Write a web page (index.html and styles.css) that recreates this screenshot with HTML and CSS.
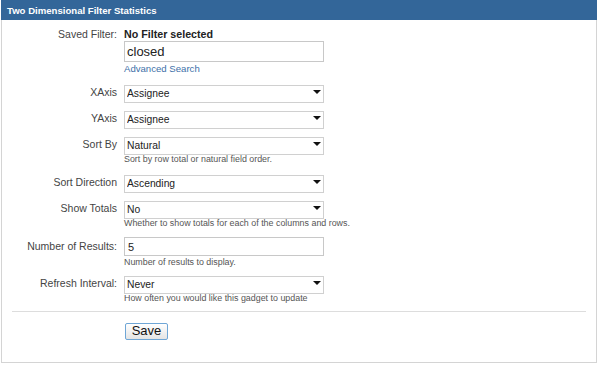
FILE: index.html
```html
<!DOCTYPE html>
<html>
<head>
<meta charset="utf-8">
<link rel="stylesheet" href="styles.css">
</head>
<body>
<div class="gadget">
  <div class="gadget-header">Two Dimensional Filter Statistics</div>
  <form class="gadget-body">
    <div class="row row-filter">
      <label class="lbl">Saved Filter:</label>
      <div class="field">
        <div class="filter-name">No Filter selected</div>
        <input class="text text-big" type="text" value="closed">
        <a class="link" href="#">Advanced Search</a>
      </div>
    </div>
    <div class="row">
      <label class="lbl">XAxis</label>
      <div class="field"><div class="sel"><select><option>Assignee</option></select></div></div>
    </div>
    <div class="row">
      <label class="lbl">YAxis</label>
      <div class="field"><div class="sel"><select><option>Assignee</option></select></div></div>
    </div>
    <div class="row">
      <label class="lbl">Sort By</label>
      <div class="field"><div class="sel"><select><option>Natural</option></select></div>
        <div class="desc">Sort by row total or natural field order.</div></div>
    </div>
    <div class="row">
      <label class="lbl">Sort Direction</label>
      <div class="field"><div class="sel"><select><option>Ascending</option></select></div></div>
    </div>
    <div class="row">
      <label class="lbl">Show Totals</label>
      <div class="field"><div class="sel"><select><option>No</option></select></div>
        <div class="desc">Whether to show totals for each of the columns and rows.</div></div>
    </div>
    <div class="row row-tight">
      <label class="lbl">Number of Results:</label>
      <div class="field"><input class="text text-num" type="text" value="5">
        <div class="desc">Number of results to display.</div></div>
    </div>
    <div class="row row-last">
      <label class="lbl">Refresh Interval:</label>
      <div class="field"><div class="sel"><select><option>Never</option></select></div>
        <div class="desc">How often you would like this gadget to update</div></div>
    </div>
    <hr class="sep">
    <div class="buttons">
      <button class="save" type="button">Save</button>
    </div>
  </form>
</div>
</body>
</html>
```

FILE: styles.css
```css
html, body {
  margin: 0;
  padding: 0;
  background: #fff;
}
body {
  font-family: "Liberation Sans", Arial, sans-serif;
  color: #333;
}
.gadget {
  width: 596px;
  margin-left: 1px;
}
.gadget-header {
  background: #336699;
  color: #fff;
  font-weight: bold;
  font-size: 9.6px;
  height: 20px;
  line-height: 21px;
  padding-left: 6px;
}
.gadget-body {
  display: flex;
  flex-direction: column;
  border: 1px solid #d4d4d4;
  border-top: none;
  padding: 7px 0 22px 0;
  margin: 0;
  height: 313px;
}
.row {
  display: grid;
  grid-template-columns: 115px 200px;
  column-gap: 7px;
  margin-bottom: 8px;
}
.row-tight {
  margin-bottom: 6px;
}
.row-last {
  margin-bottom: 0;
}
.lbl {
  text-align: right;
  font-size: 10.5px;
  line-height: 18px;
  color: #444;
}
.row-filter .lbl {
  line-height: 14px;
}
.field {
  display: flex;
  flex-direction: column;
}
.filter-name {
  font-weight: bold;
  font-size: 10.7px;
  line-height: 14px;
  color: #222;
}
.text {
  box-sizing: border-box;
  width: 200px;
  border: 1px solid #c8c8c8;
  margin: 0;
  font-family: "Liberation Sans", Arial, sans-serif;
  color: #222;
  outline: none;
}
.text-big {
  height: 21px;
  font-size: 13px;
  padding: 0 2px;
}
.text-num {
  height: 19px;
  font-size: 11px;
  padding: 0 3px;
}
.link {
  color: #3d6fa8;
  text-decoration: none;
  font-size: 9.6px;
  line-height: 13px;
  margin-left: 0;
}
.sel {
  position: relative;
  width: 200px;
  height: 18px;
}
.sel select {
  appearance: none;
  -webkit-appearance: none;
  box-sizing: border-box;
  width: 200px;
  height: 18px;
  margin: 0;
  border: 1px solid #d0d0d0;
  border-radius: 0;
  background: #fff;
  font-family: "Liberation Sans", Arial, sans-serif;
  font-size: 10.3px;
  color: #222;
  padding: 0 2px;
  outline: none;
}
.sel::after {
  content: "";
  position: absolute;
  right: 3px;
  top: 7px;
  border-left: 4px solid transparent;
  border-right: 4px solid transparent;
  border-top: 4px solid #111;
}
.desc {
  font-size: 8.9px;
  line-height: 12px;
  color: #555;
  white-space: nowrap;
}
.sep {
  border: none;
  border-top: 1px solid #ddd;
  margin: 7px 10px 9px 10px;
  height: 0;
}
.buttons {
  padding-left: 123px;
}
.save {
  box-sizing: border-box;
  width: 43px;
  height: 17px;
  padding: 0;
  margin: 0;
  font-family: "Liberation Sans", Arial, sans-serif;
  font-size: 13px;
  line-height: 14px;
  color: #111;
  border: 1px solid #6fa6d6;
  border-radius: 2px;
  background: linear-gradient(#ffffff, #e4e4e4);
}
```
